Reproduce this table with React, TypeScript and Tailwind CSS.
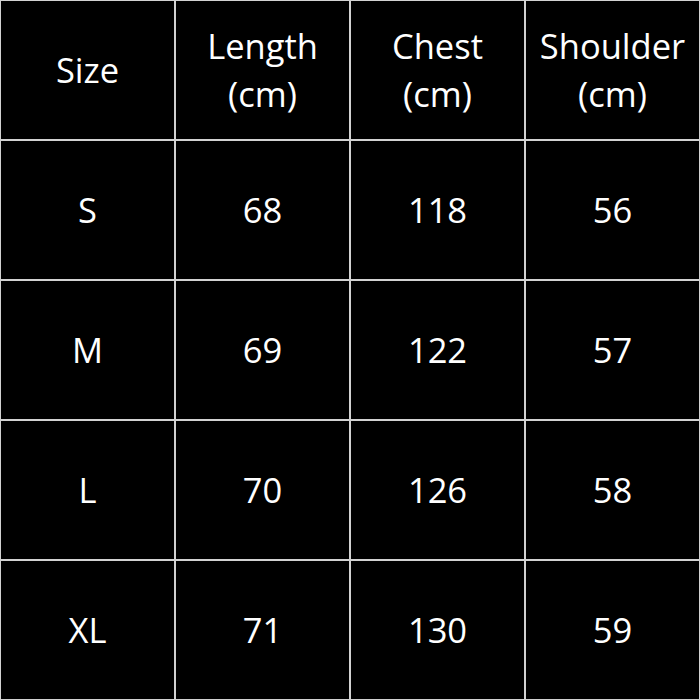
const headers = [
  ["Size"],
  ["Length", "(cm)"],
  ["Chest", "(cm)"],
  ["Shoulder", "(cm)"],
];

const rows = [
  ["S", "68", "118", "56"],
  ["M", "69", "122", "57"],
  ["L", "70", "126", "58"],
  ["XL", "71", "130", "59"],
];

export default function App() {
  return (
    <div
      className="w-[700px] h-[700px] bg-[#d2d2d2] p-[1px] grid grid-cols-4 grid-rows-5 gap-[2px] text-white text-[34.5px] leading-[48px]"
      style={{ fontFamily: '"Open Sans", sans-serif' }}
    >
      {headers.map((lines, i) => (
        <div key={i} className="bg-black flex flex-col items-center justify-center text-center">
          {lines.map((l) => (
            <span key={l}>{l}</span>
          ))}
        </div>
      ))}
      {rows.map((row) =>
        row.map((cell, j) => (
          <div key={row[0] + j} className="bg-black flex items-center justify-center">
            {cell}
          </div>
        )),
      )}
    </div>
  );
}
